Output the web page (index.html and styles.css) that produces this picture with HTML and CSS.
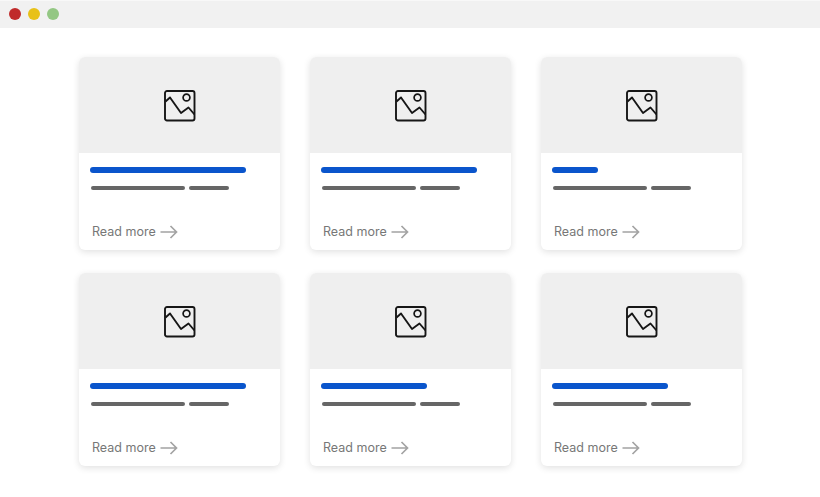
FILE: index.html
```html
<!DOCTYPE html>
<html lang="en">
<head>
    <meta charset="UTF-8">
    <meta name="viewport" content="width=device-width, initial-scale=1.0">
    <title>Cards</title>
    <link rel="stylesheet" href="styles.css">
</head>
<body>
    <svg class="sprite" aria-hidden="true">
        <symbol id="picture" viewBox="0 0 32 32">
            <rect x="1" y="1" width="29.5" height="29.5" rx="2" fill="none" stroke="currentColor" stroke-width="1.9"/>
            <circle cx="22.5" cy="7.5" r="3.4" fill="none" stroke="currentColor" stroke-width="1.7"/>
            <path d="M1.5 11.5 L6 7.5 L17 23 L24.5 17.5 L30.5 24.5" fill="none" stroke="currentColor" stroke-width="1.9" stroke-linejoin="round"/>
        </symbol>
        <symbol id="arrow" viewBox="0 0 18 14">
            <path d="M0.5 7 H16.5 M10.5 1 L16.5 7 L10.5 13" fill="none" stroke="currentColor" stroke-width="1.7"/>
        </symbol>
    </svg>

    <div class="titlebar">
        <span class="dot red"></span>
        <span class="dot yellow"></span>
        <span class="dot green"></span>
    </div>

    <div class="grid">
        <div class="card">
            <div class="thumb"><svg class="picture"><use href="#picture"/></svg></div>
            <div class="card-body">
                <div class="title-bar long"></div>
                <div class="text-bars"><span class="text-bar wide"></span><span class="text-bar short"></span></div>
                <a class="read-more">Read more <svg class="arrow"><use href="#arrow"/></svg></a>
            </div>
        </div>
        <div class="card">
            <div class="thumb"><svg class="picture"><use href="#picture"/></svg></div>
            <div class="card-body">
                <div class="title-bar long"></div>
                <div class="text-bars"><span class="text-bar wide"></span><span class="text-bar short"></span></div>
                <a class="read-more">Read more <svg class="arrow"><use href="#arrow"/></svg></a>
            </div>
        </div>
        <div class="card">
            <div class="thumb"><svg class="picture"><use href="#picture"/></svg></div>
            <div class="card-body">
                <div class="title-bar tiny"></div>
                <div class="text-bars"><span class="text-bar wide"></span><span class="text-bar short"></span></div>
                <a class="read-more">Read more <svg class="arrow"><use href="#arrow"/></svg></a>
            </div>
        </div>
        <div class="card">
            <div class="thumb"><svg class="picture"><use href="#picture"/></svg></div>
            <div class="card-body">
                <div class="title-bar long"></div>
                <div class="text-bars"><span class="text-bar wide"></span><span class="text-bar short"></span></div>
                <a class="read-more">Read more <svg class="arrow"><use href="#arrow"/></svg></a>
            </div>
        </div>
        <div class="card">
            <div class="thumb"><svg class="picture"><use href="#picture"/></svg></div>
            <div class="card-body">
                <div class="title-bar medium"></div>
                <div class="text-bars"><span class="text-bar wide"></span><span class="text-bar short"></span></div>
                <a class="read-more">Read more <svg class="arrow"><use href="#arrow"/></svg></a>
            </div>
        </div>
        <div class="card">
            <div class="thumb"><svg class="picture"><use href="#picture"/></svg></div>
            <div class="card-body">
                <div class="title-bar large"></div>
                <div class="text-bars"><span class="text-bar wide"></span><span class="text-bar short"></span></div>
                <a class="read-more">Read more <svg class="arrow"><use href="#arrow"/></svg></a>
            </div>
        </div>
    </div>
</body>
</html>
```

FILE: styles.css
```css
html, body {
    margin: 0;
    height: 497px;
    overflow: hidden;
    background: #fff;
    font-family: Inter, "Liberation Sans", sans-serif;
}
.sprite {
    display: none;
}
.titlebar {
    display: flex;
    align-items: center;
    gap: 7px;
    height: 28px;
    padding: 0 0 2px 9px;
    box-sizing: border-box;
    background: #f1f1f1;
    border-top: 1px solid #f8f8f8;
}
.dot {
    width: 12px;
    height: 12px;
    border-radius: 50%;
}
.red { background: #c02b2b; }
.yellow { background: #e8c118; }
.green { background: #93c783; }
.grid {
    display: grid;
    grid-template-columns: repeat(3, 200.5px);
    grid-auto-rows: 192.5px;
    gap: 23.5px 30.5px;
    padding: 29px 0 0 79px;
}
.card {
    display: flex;
    flex-direction: column;
    background: #fff;
    border-radius: 6px;
    overflow: hidden;
    box-shadow: 0 2px 7px rgba(0, 0, 0, 0.12);
}
.thumb {
    display: flex;
    align-items: center;
    justify-content: center;
    height: 96px;
    padding: 1px 0 0 1px;
    box-sizing: border-box;
    background: #efefef;
}
.picture {
    width: 32px;
    height: 32px;
    color: #161616;
}
.card-body {
    flex: 1;
    display: flex;
    flex-direction: column;
    padding: 14px 0 0 11px;
}
.title-bar {
    height: 5.5px;
    border-radius: 3px;
    background: #0a55cc;
}
.long { width: 156px; }
.tiny { width: 46px; }
.medium { width: 106px; }
.large { width: 116px; }
.text-bars {
    display: flex;
    gap: 4px;
    margin: 13.5px 0 0 1px;
}
.text-bar {
    height: 4px;
    border-radius: 2px;
    background: #666;
}
.wide { width: 94px; }
.short { width: 40px; }
.read-more {
    display: flex;
    align-items: center;
    gap: 4px;
    margin: 34px 0 0 2px;
    font-size: 12.5px;
    line-height: 16px;
    color: #777;
}
.arrow {
    width: 18px;
    height: 14px;
    color: #a3a3a3;
}
```
